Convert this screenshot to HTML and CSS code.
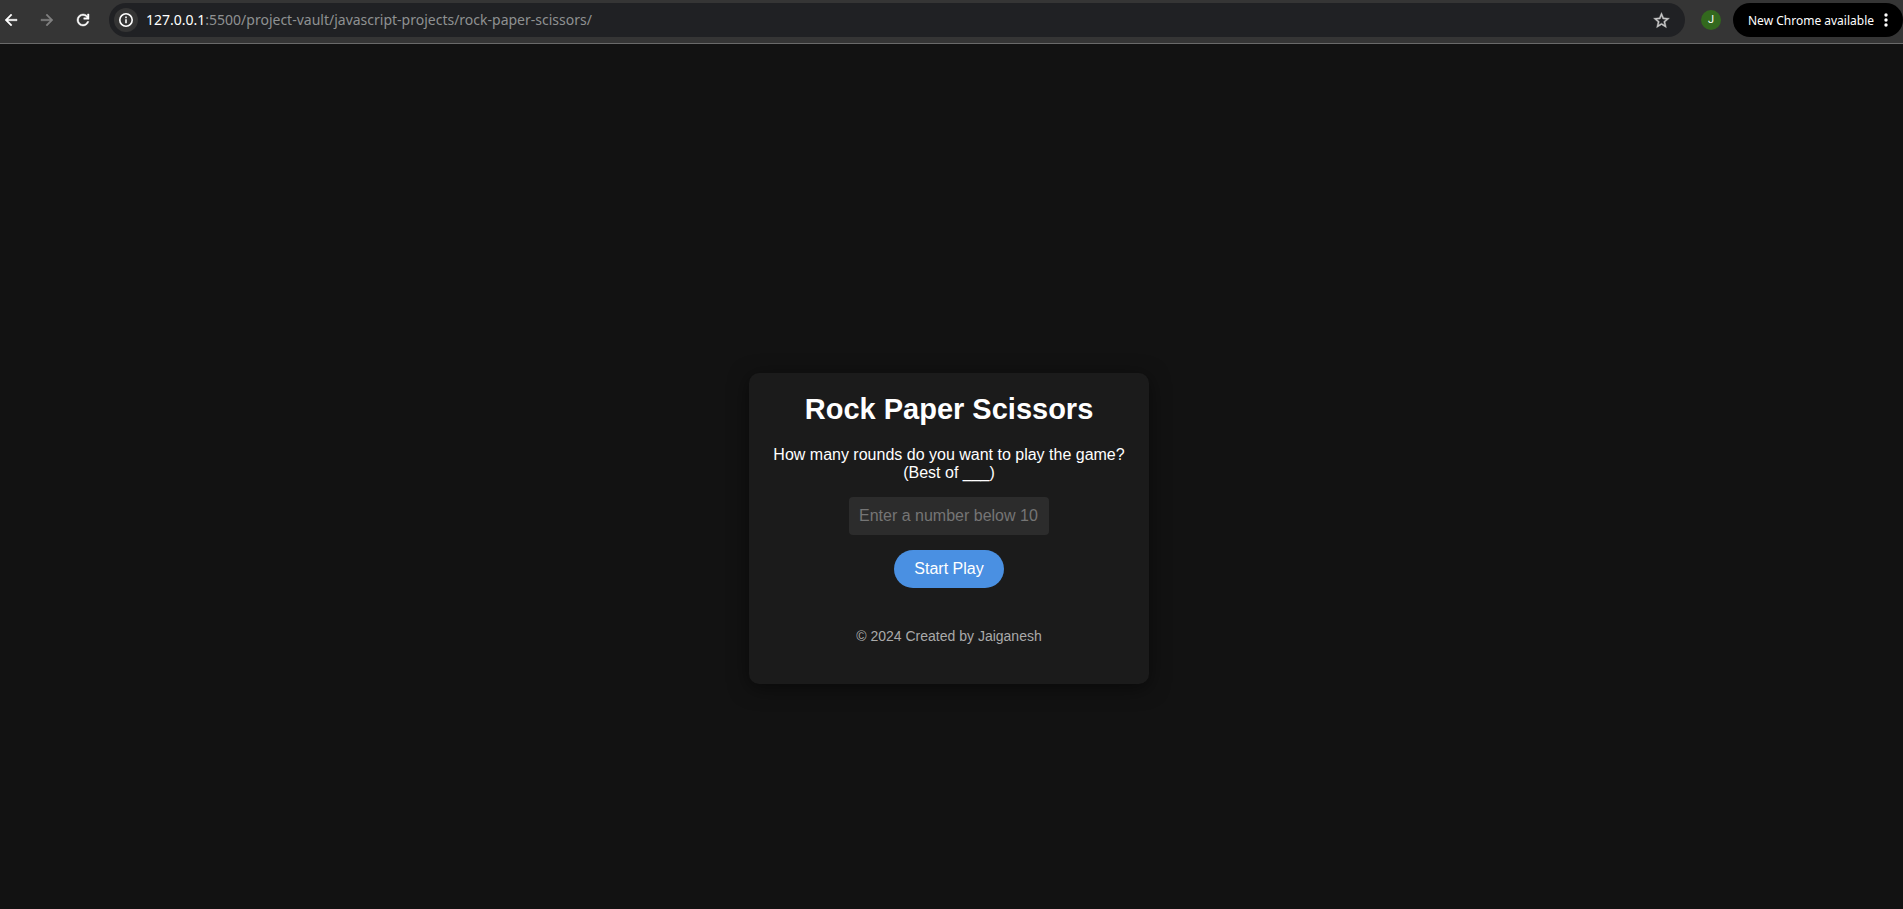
FILE: index.html
```html
<!DOCTYPE html>
<html lang="en">
<head>
<meta charset="utf-8">
<title>Rock Paper Scissors</title>
<link rel="stylesheet" href="styles.css">
</head>
<body>
<header class="toolbar">
  <nav class="nav" aria-label="History">
    <button class="nav-btn" type="button" aria-label="Back">
      <svg viewBox="0 0 24 24"><path d="m7.825 13 5.600 5.600L12 20l-8-8 8-8 1.425 1.400-5.600 5.600H20v2z"/></svg>
    </button>
    <button class="nav-btn" type="button" aria-label="Forward" disabled>
      <svg viewBox="0 0 24 24"><path d="M16.175 13H4v-2h12.175l-5.600-5.600L12 4l8 8-8 8-1.425-1.400z"/></svg>
    </button>
    <button class="nav-btn" type="button" aria-label="Reload">
      <svg viewBox="0 0 24 24"><path d="M12 20q-3.350 0-5.675-2.325T4 12q0-3.350 2.325-5.675T12 4q1.725 0 3.300.713T18 6.750V4h2v7h-7V9h4.200q-.800-1.400-2.187-2.200T12 6Q9.500 6 7.750 7.750T6 12q0 2.500 1.750 4.250T12 18q1.925 0 3.475-1.100T17.650 14h2.100q-.700 2.650-2.850 4.325T12 20"/></svg>
    </button>
  </nav>
  <div class="omnibox">
    <button class="site-info" type="button" aria-label="Site information">
      <svg viewBox="0 0 16 16" fill="none" stroke="currentColor"><circle cx="8" cy="8" r="6.200" stroke-width="1.600"/><path d="M8 7.300v4M8 4.600v1.600" stroke-width="1.600"/></svg>
    </button>
    <div class="url"><span class="host">127.0.0.1</span>:5500/project-vault/javascript-projects/rock-paper-scissors/</div>
    <button class="star" type="button" aria-label="Bookmark this page">
      <svg viewBox="0 0 24 24" fill="currentColor" stroke="currentColor" stroke-width=".5"><path d="m22 9.240-7.190-.620L12 2 9.190 8.630 2 9.240l5.460 4.730L5.820 21 12 17.270 18.180 21l-1.630-7.030L22 9.240zM12 15.400l-3.760 2.270 1-4.280-3.320-2.880 4.380-.380L12 6.100l1.710 4.040 4.380.380-3.320 2.880 1 4.280L12 15.400z"/></svg>
    </button>
  </div>
  <button class="avatar" type="button">J</button>
  <button class="update" type="button">
    <span>New Chrome available</span>
    <svg viewBox="0 0 4 16" fill="currentColor"><circle cx="2" cy="3" r="1.700"/><circle cx="2" cy="8" r="1.700"/><circle cx="2" cy="13" r="1.700"/></svg>
  </button>
</header>
<main class="page">
  <section class="card">
    <h1 class="title">Rock Paper Scissors</h1>
    <label class="question" for="rounds">How many rounds do you want to play the game?<br>(Best of ___)</label>
    <input class="rounds" id="rounds" type="text" inputmode="numeric" placeholder="Enter a number below 10">
    <button class="start" type="button">Start Play</button>
    <footer class="credit">© 2024 Created by Jaiganesh</footer>
  </section>
</main>
</body>
</html>
```
FILE: styles.css
```css
* {
  box-sizing: border-box;
}

body {
  display: flex;
  flex-direction: column;
  min-height: 100vh;
  margin: 0;
  background: #121212;
  color: #fff;
  font-family: "Liberation Sans", Arial, sans-serif;
  font-size: 16px;
}

button {
  padding: 0;
  border: 0;
  background: none;
  color: inherit;
  font: inherit;
}

.toolbar {
  display: flex;
  align-items: center;
  padding: 3px 0 6px;
  border-bottom: 1px solid #6a6a6a;
  background: #353535;
  font-family: "Noto Sans", sans-serif;
}

.nav {
  display: flex;
  gap: 18px;
  padding: 0 17px 0 2px;
}

.nav-btn {
  display: flex;
}

.nav-btn:disabled {
  color: #808080;
}

.nav-btn svg {
  width: 18px;
  height: 18px;
  fill: currentColor;
  stroke: currentColor;
  stroke-width: 0.6;
}

.omnibox {
  display: flex;
  flex: 1;
  align-items: center;
  height: 34px;
  padding: 0 14px 0 5px;
  border-radius: 17px;
  background: #202124;
}

.site-info {
  display: flex;
  align-items: center;
  justify-content: center;
  width: 24px;
  height: 24px;
  border-radius: 50%;
  background: #353535;
}

.site-info svg {
  width: 16px;
  height: 16px;
}

.url {
  flex: 1;
  padding-left: 8px;
  color: #8f9192;
  font-size: 14px;
  line-height: 20px;
}

.host {
  color: #fff;
}

.star {
  display: flex;
  color: #c7c7c7;
}

.star svg {
  width: 19px;
  height: 19px;
}

.avatar {
  width: 20px;
  height: 20px;
  margin: 0 12px 0 16px;
  border-radius: 50%;
  background: #33691e;
  font-family: Roboto, sans-serif;
  font-size: 11px;
  line-height: 20px;
}

.update {
  display: flex;
  align-items: center;
  gap: 10px;
  height: 34px;
  padding: 0 15px;
  border-radius: 17px;
  background: #000;
  font-size: 12px;
}

.update svg {
  width: 4px;
  height: 16px;
}

.page {
  display: flex;
  flex: 1;
  align-items: center;
  justify-content: center;
  padding: 104px 5px 0 0;
}

.card {
  display: flex;
  flex-direction: column;
  align-items: center;
  width: 400px;
  max-width: 100%;
  padding: 20px;
  border-radius: 10px;
  background: #1b1b1b;
  box-shadow: 0 4px 20px rgba(0, 0, 0, 0.5);
  text-align: center;
}

.title {
  margin: 0 0 20px;
  font-size: 29px;
  line-height: 33px;
}

.question {
  margin-bottom: 15px;
  line-height: 18px;
}

.rounds {
  width: 200px;
  height: 38px;
  margin-bottom: 15px;
  padding: 0 10px;
  border: 0;
  border-radius: 4px;
  background: #2c2c2c;
  color: #fff;
  font: inherit;
}

.rounds::placeholder {
  color: #757575;
}

.start {
  height: 38px;
  padding: 0 20px;
  border-radius: 19px;
  background: #4a90e2;
}

.credit {
  padding: 40px 0 20px;
  color: #aaa;
  font-size: 14px;
  line-height: 16px;
}
```
